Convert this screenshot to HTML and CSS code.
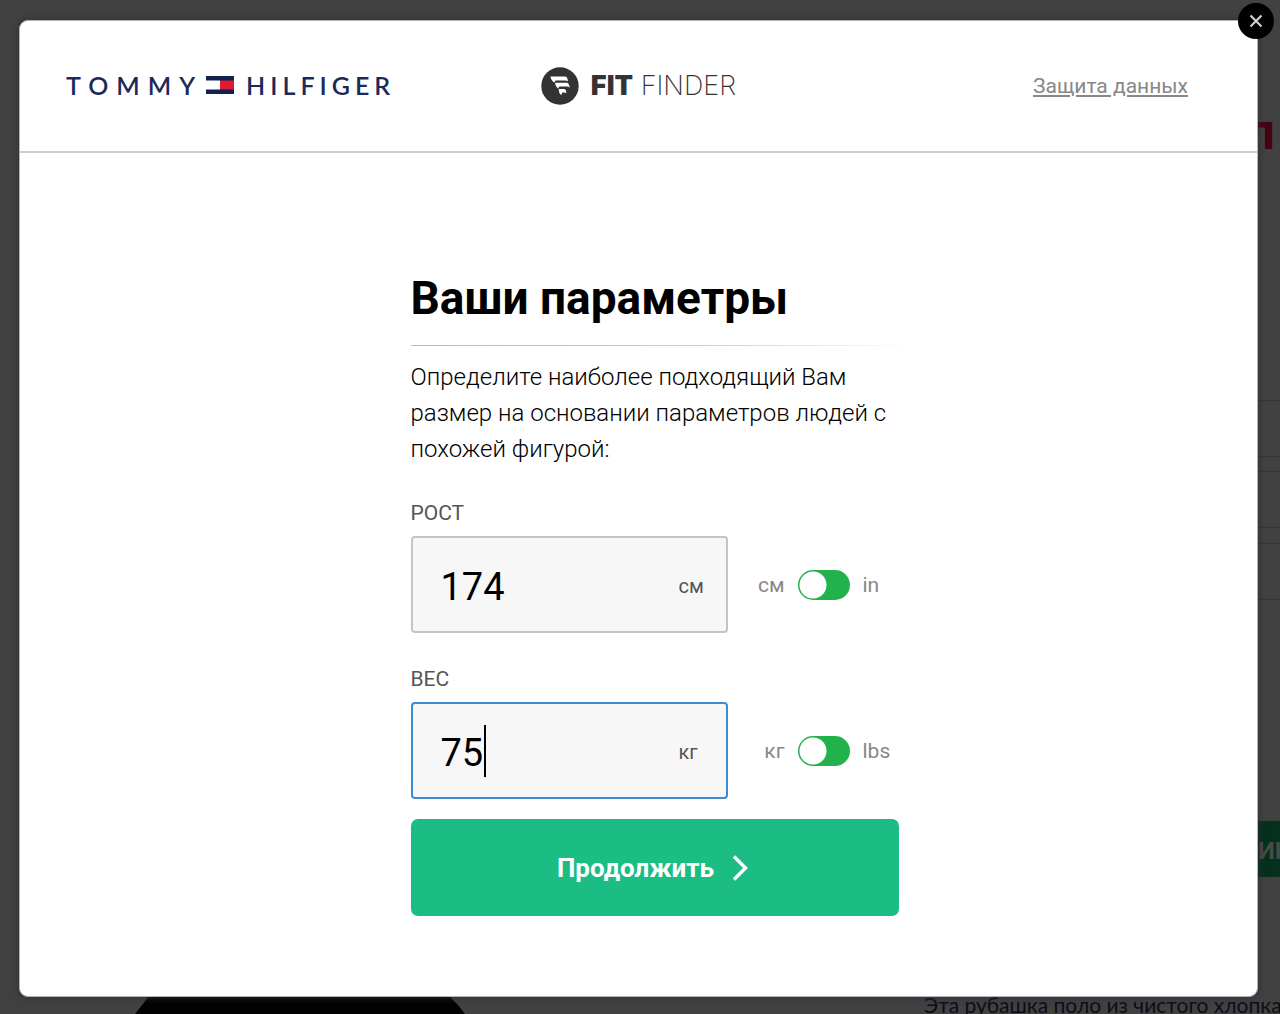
FILE: index.html
```html
<!DOCTYPE html>
<html lang="ru">
<head>
  <meta charset="UTF-8">
  <meta name="viewport" content="width=device-width, initial-scale=1.0">
  <title>Fit Finder</title>
  <link rel="stylesheet" href="styles.css">
</head>
<body>
  <!-- product page behind the modal -->
  <div class="page" aria-hidden="true">
    <span class="page-price">л</span>
    <div class="page-line line-1"></div>
    <div class="page-line line-2"></div>
    <div class="page-line line-3"></div>
    <div class="page-line line-4"></div>
    <div class="page-line line-5"></div>
    <div class="page-line line-6"></div>
    <div class="page-buy">ИН</div>
    <svg class="page-shirt" width="330" height="18" viewBox="0 0 330 18">
      <path d="M0 18 Q8 8 14 0 H314 Q323 8 330 18 Z" fill="#020203"/>
    </svg>
    <p class="page-text">Эта рубашка поло из чистого хлопка</p>
  </div>

  <div class="modal" role="dialog" aria-labelledby="title">
    <button class="close" type="button" aria-label="Закрыть">
      <svg width="14" height="14" viewBox="0 0 14 14">
        <path d="M1.5 1.5 L12.5 12.5 M12.5 1.5 L1.5 12.5" stroke="#d0d0d0" stroke-width="2.2"/>
      </svg>
    </button>

    <header class="header">
      <div class="brand">
        <span class="brand-first">TOMMY</span>
        <svg width="28" height="18" viewBox="0 0 28 18">
          <path d="M0 0 H28 V18 H0 V13.500 H14 V4.500 H0 Z" fill="#14204f"/>
          <path d="M14 4.500 H28 V13.500 H14 Z" fill="#dc1a35"/>
        </svg>
        <span class="brand-last">HILFIGER</span>
      </div>
      <div class="finder">
        <svg width="38" height="38" viewBox="0 0 38 38">
          <circle cx="19" cy="19" r="18.700" fill="#333"/>
          <g fill="#fff">
            <path d="M9.500 9.500 H24 Q26 9.500 26.400 11.500 L27 14.800 Q26.200 13.400 24.500 13.400 H14.500 L13.400 15.600 Q10 13.500 9.500 9.500 Z"/>
            <path d="M14 15.800 H25.500 Q27.500 15.800 28 17.800 L28.800 20.800 Q27.600 19.500 26 19.500 H18.300 L17.200 21.700 Q14.300 19.800 14 15.800 Z"/>
            <path d="M17.600 22 H23 Q24.700 22 25 23.800 L25.300 26.300 Q24.400 25.400 23 25.400 H21.200 L20.300 28.300 Q17.600 26 17.600 22 Z"/>
          </g>
        </svg>
        <span class="finder-name"><b>FIT</b> FINDER</span>
      </div>
      <a class="privacy" href="#">Защита данных</a>
    </header>

    <form class="content">
      <h1 id="title">Ваши параметры</h1>
      <div class="divider"></div>
      <p class="intro">Определите наиболее подходящий Вам размер на основании параметров людей с похожей фигурой:</p>

      <label class="label" for="height">РОСТ</label>
      <div class="row">
        <div class="field">
          <input id="height" type="text" inputmode="numeric" value="174">
          <span class="unit">см</span>
        </div>
        <label class="switch">
          <span class="from">см</span>
          <input type="checkbox" class="toggle">
          <span>in</span>
        </label>
      </div>

      <label class="label" for="weight">ВЕС</label>
      <div class="row">
        <div class="field active">
          <input id="weight" type="text" inputmode="numeric" value="75">
          <span class="caret"></span>
          <span class="unit">кг</span>
        </div>
        <label class="switch">
          <span class="from">кг</span>
          <input type="checkbox" class="toggle">
          <span>lbs</span>
        </label>
      </div>

      <button class="submit" type="button">
        Продолжить
        <svg width="16" height="26" viewBox="0 0 16 26">
          <path d="M2 1.500 L13.500 13 L2 24.500" fill="none" stroke="#fff" stroke-width="3.400"/>
        </svg>
      </button>
    </form>
  </div>
</body>
</html>
```

FILE: styles.css
```css
* {
  box-sizing: border-box;
}
body {
  margin: 0;
  min-height: 100vh;
  padding: 20px 22px 17px 19px;
  display: flex;
  overflow: hidden;
  background: #424142;
  font-family: Roboto, "Liberation Sans", sans-serif;
  color: #000;
}

/* product page behind the modal */
.page {
  position: absolute;
  inset: 0;
  overflow: hidden;
}
.page-price {
  position: absolute;
  top: 101px;
  right: 4px;
  font: bold 48px/60px "Open Sans", sans-serif;
  color: #43040f;
}
.page-line {
  position: absolute;
  right: 0;
  width: 24px;
  height: 1px;
  background: #363636;
}
.line-1 { top: 400px; }
.line-2 { top: 456px; }
.line-3 { top: 471px; }
.line-4 { top: 527px; }
.line-5 { top: 543px; }
.line-6 { top: 599px; }
.page-buy {
  position: absolute;
  top: 821px;
  right: 0;
  width: 22px;
  height: 56px;
  overflow: hidden;
  background: #04301d;
  color: #4a4a48;
  font-size: 24px;
  font-weight: bold;
  line-height: 60px;
}
.page-shirt {
  position: absolute;
  left: 135px;
  bottom: 0;
}
.page-text {
  position: absolute;
  left: 924px;
  bottom: -5px;
  margin: 0;
  font-family: Lato, sans-serif;
  font-size: 21px;
  line-height: 28px;
  white-space: nowrap;
  color: #0c0d18;
}

.modal {
  position: relative;
  flex: 1;
  display: flex;
  flex-direction: column;
  background: #fff;
  border: 1px solid #b4b4b8;
  border-radius: 9px;
  box-shadow: 0 0 8px #2c2d38;
}
.close {
  position: absolute;
  top: -18px;
  right: -17px;
  width: 36px;
  height: 36px;
  padding: 0;
  display: flex;
  align-items: center;
  justify-content: center;
  border: none;
  border-radius: 50%;
  background: #000;
  cursor: pointer;
}

.header {
  height: 132px;
  padding: 0 46px;
  display: grid;
  grid-template-columns: 1fr auto 1fr;
  align-items: center;
  border-bottom: 2px solid #cdcdcf;
}
.brand {
  display: flex;
  align-items: center;
  padding-bottom: 2px;
  font-family: Lato, sans-serif;
  font-size: 25px;
  font-weight: 600;
  line-height: 30px;
  color: #1b2a59;
}
.brand-first {
  margin-right: 3px;
  letter-spacing: 8px;
}
.brand-last {
  margin-left: 12px;
  letter-spacing: 5px;
}
.finder {
  display: flex;
  align-items: center;
  gap: 12px;
  color: #333;
}
.finder-name {
  font-family: Inter, sans-serif;
  font-size: 27px;
  font-weight: 200;
  line-height: 30px;
}
.finder-name b {
  font-weight: 900;
}
.privacy {
  justify-self: end;
  margin-right: 23px;
  font-size: 21px;
  color: #888;
}

.content {
  width: 520px;
  max-width: 100%;
  margin: 0 auto;
  padding: 114px 0 78px 32px;
}
h1 {
  margin: 0;
  font-size: 46px;
  line-height: 62px;
}
.divider {
  height: 1px;
  margin: 16px -16px 13px 0;
  background: linear-gradient(to right, #b8b8b8, #d0d0d0 60%, #fff);
}
.intro {
  margin: 0 0 32px;
  font-size: 24px;
  font-weight: 300;
  line-height: 36px;
}
.label {
  display: block;
  margin-bottom: 9px;
  font-size: 21px;
  line-height: 28px;
  color: #555;
}
.row {
  display: flex;
  align-items: center;
  margin-bottom: 32px;
}
.field {
  position: relative;
  flex: none;
  width: 317px;
  height: 97px;
  display: flex;
  align-items: center;
  background: #f7f7f8;
  border: 2px solid #c4c4c8;
  border-radius: 4px;
}
.field.active {
  border-color: #3d8ad6;
}
.field input {
  flex: 1;
  min-width: 0;
  height: 100%;
  padding: 4px 0 0 28px;
  border: none;
  outline: none;
  background: none;
  font-family: inherit;
  font-size: 38px;
  color: #000;
}
.caret {
  position: absolute;
  top: 21px;
  left: 71px;
  width: 2px;
  height: 52px;
  background: #000;
}
.unit {
  width: 47px;
  padding-top: 2px;
  font-size: 20px;
  color: #555;
}
.switch {
  display: flex;
  align-items: center;
  gap: 13px;
  margin-left: 17px;
  font-size: 21px;
  color: #888;
}
.from {
  width: 40px;
  text-align: right;
}
.toggle {
  appearance: none;
  width: 52px;
  height: 30px;
  margin: 0;
  border-radius: 15px;
  background: radial-gradient(circle at 15px 15px, #fff 13px, #21b24b 14px);
  cursor: pointer;
}
.toggle:checked {
  background: radial-gradient(circle at 37px 15px, #fff 13px, #21b24b 14px);
}
.submit {
  width: 100%;
  height: 97px;
  margin-top: -12px;
  padding: 0 4px 0 0;
  display: flex;
  align-items: center;
  justify-content: center;
  gap: 18px;
  border: none;
  border-radius: 7px;
  background: #1bbd84;
  color: #fff;
  font-family: inherit;
  font-size: 26px;
  font-weight: bold;
  cursor: pointer;
}
```
